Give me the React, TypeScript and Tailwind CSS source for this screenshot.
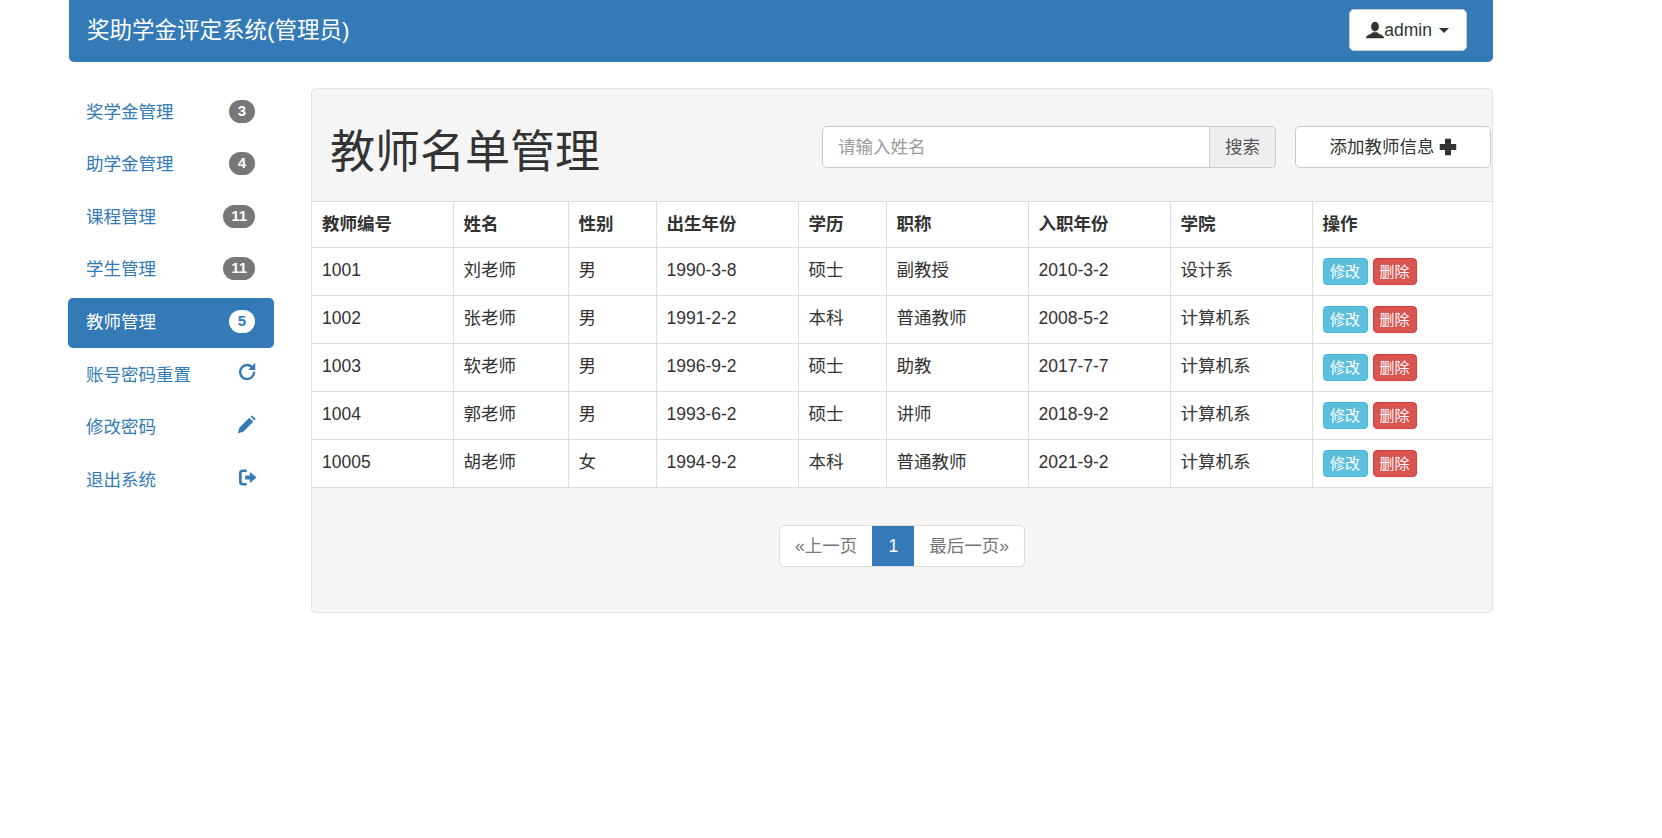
import React from "react";

const FONT = "font-['Liberation_Sans','Noto_Sans_CJK_SC',sans-serif]";

const menu = [
  { label: "奖学金管理", badge: "3" },
  { label: "助学金管理", badge: "4" },
  { label: "课程管理", badge: "11" },
  { label: "学生管理", badge: "11" },
  { label: "教师管理", badge: "5", active: true },
];

const teachers = [
  ["1001", "刘老师", "男", "1990-3-8", "硕士", "副教授", "2010-3-2", "设计系"],
  ["1002", "张老师", "男", "1991-2-2", "本科", "普通教师", "2008-5-2", "计算机系"],
  ["1003", "软老师", "男", "1996-9-2", "硕士", "助教", "2017-7-7", "计算机系"],
  ["1004", "郭老师", "男", "1993-6-2", "硕士", "讲师", "2018-9-2", "计算机系"],
  ["10005", "胡老师", "女", "1994-9-2", "本科", "普通教师", "2021-9-2", "计算机系"],
];

const heads = ["教师编号", "姓名", "性别", "出生年份", "学历", "职称", "入职年份", "学院", "操作"];
const widths = ["w-[141px]", "w-[115px]", "w-[88px]", "w-[142px]", "w-[88px]", "w-[142px]", "w-[142px]", "w-[142px]", "w-auto"];

// glyphicon 모양 아이콘
const UserIcon = () => (
  <svg viewBox="0 0 24 24" fill="currentColor" className="h-[18px] w-[18px]">
    <ellipse cx="12" cy="7.5" rx="5.2" ry="6.5" />
    <path d="M0 23c0-3.5 3.5-4.6 6.5-5.6L9 15h6l2.500 2.400c3 1 6.500 2.100 6.500 5.600z" />
  </svg>
);

const PlusIcon = () => (
  <svg viewBox="0 0 24 24" fill="currentColor" className="h-[18px] w-[18px]">
    <path d="M8 1h8v7h7v8h-7v7H8v-7H1V8h7z" />
  </svg>
);

const RepeatIcon = () => (
  <svg viewBox="0 0 24 24" className="h-[18px] w-[18px]">
    <path d="M18.500 6.500A9.300 9.300 0 1 0 21.500 13" fill="none" stroke="currentColor" strokeWidth="3.200" />
    <path d="M23 1v9.500h-9.500z" fill="currentColor" />
  </svg>
);

const PencilIcon = () => (
  <svg viewBox="0 0 24 24" className="h-[19px] w-[19px]" fill="currentColor">
    <path d="M1 23l2-7L15.500 3.500l5 5L8 21z" />
    <path d="M17 2l2-1.500 4.500 4.500-1.500 2z" />
  </svg>
);

const LogoutIcon = () => (
  <svg viewBox="0 0 24 24" className="h-[19px] w-[19px]" fill="currentColor">
    <path d="M11 3.500H6a3 3 0 0 0-3 3v11a3 3 0 0 0 3 3h5" fill="none" stroke="currentColor" strokeWidth="3.400" />
    <path d="M9 9.500h6V5l8.500 7-8.500 7v-4.500H9z" />
  </svg>
);

export default function App() {
  return (
    <div className={`${FONT} min-h-[838px] w-[1493px] bg-white pl-[69px] text-[17.5px] text-[#333]`}>
      {/* 상단 바 */}
      <div className="flex h-[62px] items-center justify-between rounded-b-[5px] bg-[#337ab7] pl-[18px] pr-[26px]">
        <span className="text-[22.5px] text-white">奖助学金评定系统(管理员)</span>
        <button className="mb-[2px] flex h-[42px] items-center rounded-[5px] border border-[#ccc] bg-white pl-4 pr-[17px] text-[#333]">
          <UserIcon />
          <span>admin</span>
          <span className="ml-[7px] h-0 w-0 border-x-[5px] border-t-[5px] border-x-transparent border-t-[#333]" />
        </button>
      </div>

      <div className="mt-[26px] flex">
        <ul className="-ml-px w-[206px] shrink-0">
          {menu.map((m) => (
            <li
              key={m.label}
              className={`mb-[2.5px] flex h-[50px] items-center justify-between rounded-[5px] pl-[18px] pr-[19px] ${
                m.active ? "bg-[#337ab7] text-white" : "text-[#337ab7]"
              }`}
            >
              <span className="mb-[2px]">{m.label}</span>
              <span
                className={`mb-[4px] flex h-[23px] min-w-[26px] items-center justify-center rounded-full px-[8px] text-[15px] font-bold ${
                  m.active ? "bg-white text-[#337ab7]" : "bg-[#777] text-white"
                }`}
              >
                {m.badge}
              </span>
            </li>
          ))}
          <li className="mb-[2.500px] flex h-[50px] items-center justify-between pl-[18px] pr-[18px] text-[#337ab7]">
            <span>账号密码重置</span>
            <span className="mb-[9px]">
              <RepeatIcon />
            </span>
          </li>
          <li className="mb-[2.500px] flex h-[50px] items-center justify-between pl-[18px] pr-[18px] text-[#337ab7]">
            <span className="mb-[2px]">修改密码</span>
            <span className="mb-[8px]">
              <PencilIcon />
            </span>
          </li>
          <li className="flex h-[50px] items-center justify-between pl-[18px] pr-[17px] text-[#337ab7]">
            <span>退出系统</span>
            <span className="mb-[6px]">
              <LogoutIcon />
            </span>
          </li>
        </ul>

        <div className="ml-[37px] h-[525px] flex-1 rounded-[5px] border border-[#e3e3e3] bg-[#f5f5f5]">
          <div className="flex h-[112px] items-center pl-[18px] pr-px pt-[4px]">
            <h1 className="mt-[11px] flex-1 text-[45px] font-normal leading-none">教师名单管理</h1>
            <div className="flex h-[42px] w-[454px]">
              <input
                placeholder="请输入姓名"
                className="min-w-0 flex-1 rounded-l-[5px] border border-[#ccc] bg-white px-[15px] text-[17.5px] placeholder:text-[#999]"
              />
              <span className="flex w-[66px] items-center justify-center rounded-r-[5px] border border-l-0 border-[#ccc] bg-[#eee] text-[#555]">
                搜索
              </span>
            </div>
            <button className="ml-[19px] flex h-[42px] w-[196px] items-center justify-center gap-[4px] rounded-[5px] border border-[#ccc] bg-white">
              添加教师信息
              <PlusIcon />
            </button>
          </div>

          <table className="w-full table-fixed border-collapse bg-white">
            <thead>
              <tr className="h-[46px] border-y border-[#ddd]">
                {heads.map((h, i) => (
                  <th key={h} className={`${widths[i]} border-l border-[#ddd] px-[10px] text-left font-bold first:border-l-0`}>
                    {h}
                  </th>
                ))}
              </tr>
            </thead>
            <tbody>
              {teachers.map((row) => (
                <tr key={row[0]} className="h-[48px] border-b border-[#ddd]">
                  {row.map((c, i) => (
                    <td key={i} className="border-l border-[#ddd] px-[10px] pb-[2px] first:border-l-0">
                      {c}
                    </td>
                  ))}
                  <td className="border-l border-[#ddd] px-[10px]">
                    <div className="mb-px flex gap-[5px] text-[15px] text-white">
                      <span className="rounded-[4px] border border-[#46b8da] bg-[#5bc0de] px-[6.500px] leading-[25px]">修改</span>
                      <span className="rounded-[4px] border border-[#d43f3a] bg-[#d9534f] px-[6px] leading-[25px]">删除</span>
                    </div>
                  </td>
                </tr>
              ))}
            </tbody>
          </table>

          <div className="mt-[37px] flex justify-center">
            <div className="flex h-[42px] items-center overflow-hidden rounded-[5px] border border-[#ddd] bg-white text-[#777]">
              <span className="px-[15px]">«上一页</span>
              <span className="flex h-[42px] w-[42px] items-center justify-center bg-[#337ab7] text-white">1</span>
              <span className="px-[15px]">最后一页»</span>
            </div>
          </div>
        </div>
      </div>
    </div>
  );
}
